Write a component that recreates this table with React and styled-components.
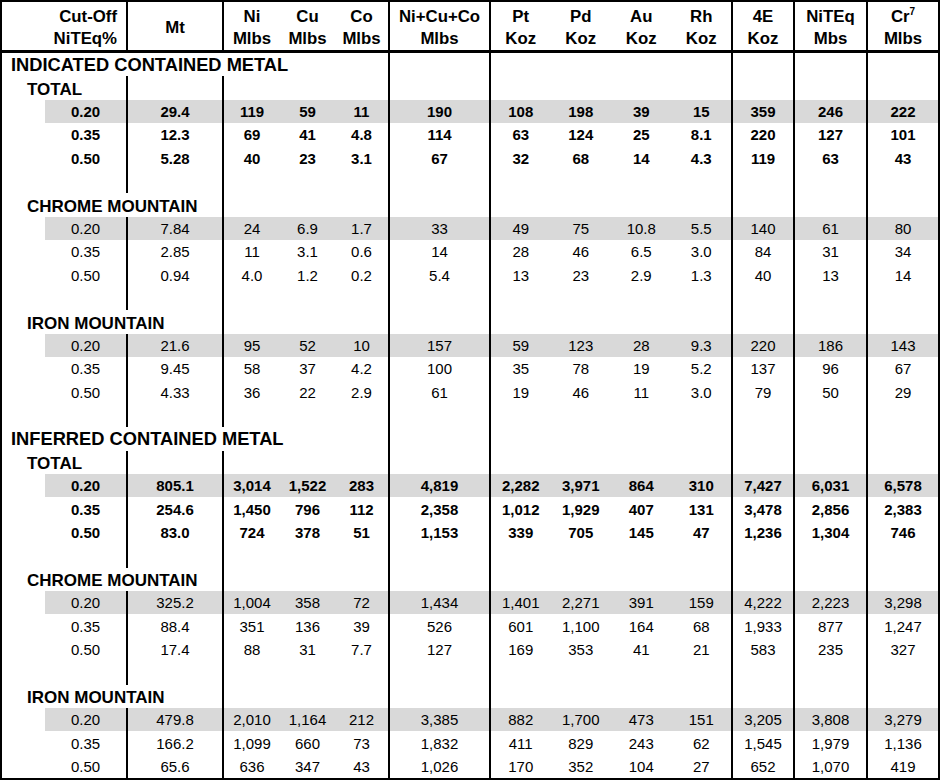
import styled, { createGlobalStyle } from 'styled-components';

const GlobalStyle = createGlobalStyle`
  html, body {
    margin: 0;
    padding: 0;
    background: #ffffff;
  }
  body {
    font-family: "Liberation Sans", Arial, sans-serif;
    color: #000000;
  }
`;

// column widths measured from the grid lines (centre to centre)
const COLS = [44, 82, 96, 57, 55, 54, 101, 60.5, 60.5, 60.5, 60.5, 62, 73, 72];

// columns that carry a vertical rule on their right side
const RULED = new Set([1, 2, 5, 6, 10, 11, 12, 13]);

const HEAD = [
  ['Mt'],
  ['Ni', 'Mlbs'],
  ['Cu', 'Mlbs'],
  ['Co', 'Mlbs'],
  ['Ni+Cu+Co', 'Mlbs'],
  ['Pt', 'Koz'],
  ['Pd', 'Koz'],
  ['Au', 'Koz'],
  ['Rh', 'Koz'],
  ['4E', 'Koz'],
  ['NiTEq', 'Mbs'],
  ['Cr7', 'Mlbs'],
];

const SECTIONS = [
  {
    title: 'INDICATED CONTAINED METAL',
    groups: [
      {
        name: 'TOTAL',
        bold: true,
        rows: [
          ['0.20', '29.4', '119', '59', '11', '190', '108', '198', '39', '15', '359', '246', '222'],
          ['0.35', '12.3', '69', '41', '4.8', '114', '63', '124', '25', '8.1', '220', '127', '101'],
          ['0.50', '5.28', '40', '23', '3.1', '67', '32', '68', '14', '4.3', '119', '63', '43'],
        ],
      },
      {
        name: 'CHROME MOUNTAIN',
        rows: [
          ['0.20', '7.84', '24', '6.9', '1.7', '33', '49', '75', '10.8', '5.5', '140', '61', '80'],
          ['0.35', '2.85', '11', '3.1', '0.6', '14', '28', '46', '6.5', '3.0', '84', '31', '34'],
          ['0.50', '0.94', '4.0', '1.2', '0.2', '5.4', '13', '23', '2.9', '1.3', '40', '13', '14'],
        ],
      },
      {
        name: 'IRON MOUNTAIN',
        rows: [
          ['0.20', '21.6', '95', '52', '10', '157', '59', '123', '28', '9.3', '220', '186', '143'],
          ['0.35', '9.45', '58', '37', '4.2', '100', '35', '78', '19', '5.2', '137', '96', '67'],
          ['0.50', '4.33', '36', '22', '2.9', '61', '19', '46', '11', '3.0', '79', '50', '29'],
        ],
      },
    ],
  },
  {
    title: 'INFERRED CONTAINED METAL',
    groups: [
      {
        name: 'TOTAL',
        bold: true,
        rows: [
          ['0.20', '805.1', '3,014', '1,522', '283', '4,819', '2,282', '3,971', '864', '310', '7,427', '6,031', '6,578'],
          ['0.35', '254.6', '1,450', '796', '112', '2,358', '1,012', '1,929', '407', '131', '3,478', '2,856', '2,383'],
          ['0.50', '83.0', '724', '378', '51', '1,153', '339', '705', '145', '47', '1,236', '1,304', '746'],
        ],
      },
      {
        name: 'CHROME MOUNTAIN',
        rows: [
          ['0.20', '325.2', '1,004', '358', '72', '1,434', '1,401', '2,271', '391', '159', '4,222', '2,223', '3,298'],
          ['0.35', '88.4', '351', '136', '39', '526', '601', '1,100', '164', '68', '1,933', '877', '1,247'],
          ['0.50', '17.4', '88', '31', '7.7', '127', '169', '353', '41', '21', '583', '235', '327'],
        ],
      },
      {
        name: 'IRON MOUNTAIN',
        rows: [
          ['0.20', '479.8', '2,010', '1,164', '212', '3,385', '882', '1,700', '473', '151', '3,205', '3,808', '3,279'],
          ['0.35', '166.2', '1,099', '660', '73', '1,832', '411', '829', '243', '62', '1,545', '1,979', '1,136'],
          ['0.50', '65.6', '636', '347', '43', '1,026', '170', '352', '104', '27', '652', '1,070', '419'],
        ],
      },
    ],
  },
];

const Table = styled.table`
  table-layout: fixed;
  border-collapse: collapse;
  width: 940px;
  border: 2px solid #000;
  font-family: "Liberation Sans", Arial, sans-serif;
  color: #000;
`;

const HeadCell = styled.th`
  height: 43px;
  padding: 4px ${({ $align }) => ($align === 'right' ? '9px' : '0')} 0 0;
  border-bottom: 3px solid #000;
  border-right: ${({ $ruled }) => ($ruled ? '2px solid #000' : 'none')};
  font-size: 16.8px;
  font-weight: 700;
  line-height: 22px;
  text-align: ${({ $align }) => $align || 'center'};
  vertical-align: middle;
  white-space: nowrap;
`;

const Sup = styled.sup`
  font-size: 10px;
  line-height: 0;
  vertical-align: 7px;
`;

const Cell = styled.td`
  height: 23.4px;
  padding: 0;
  border-right: ${({ $ruled }) => ($ruled ? '2px solid #000' : 'none')};
  background: ${({ $shaded }) => ($shaded ? '#d9d9d9' : 'transparent')};
  font-size: 15px;
  font-weight: ${({ $bold }) => ($bold ? 700 : 400)};
  line-height: 21px;
  text-align: center;
  white-space: nowrap;
  overflow: visible;
`;

const SectionCell = styled(Cell)`
  padding-left: 9px;
  font-size: 18.3px;
  font-weight: 700;
  text-align: left;
`;

const GroupCell = styled(Cell)`
  padding-left: 25px;
  font-size: 17px;
  font-weight: 700;
  text-align: left;
  vertical-align: bottom;
`;

const headLabel = (lines) =>
  lines.map((l, i) => (
    <span key={i}>
      {i > 0 && <br />}
      {l === 'Cr7' ? (
        <>
          Cr<Sup>7</Sup>
        </>
      ) : (
        l
      )}
    </span>
  ));

// empty ruled cells from column `from` to the end
const Fill = ({ from }) =>
  COLS.slice(from).map((_, i) => <Cell key={from + i} $ruled={RULED.has(from + i)} />);

const DataRow = ({ values, bold }) => {
  const shaded = values[0] === '0.20';
  return (
    <tr>
      <Cell />
      {values.map((v, i) => (
        <Cell key={i} $bold={bold} $shaded={shaded} $ruled={RULED.has(i + 1)}>
          {v}
        </Cell>
      ))}
    </tr>
  );
};

const App = () => {
  const body = [];
  SECTIONS.forEach((sec, si) => {
    body.push(
      <tr key={`s${si}`}>
        <SectionCell colSpan={6} $ruled>
          {sec.title}
        </SectionCell>
        <Fill from={6} />
      </tr>
    );
    sec.groups.forEach((g, gi) => {
      const span = g.bold ? 2 : 3;
      body.push(
        <tr key={`g${si}-${gi}`}>
          <GroupCell colSpan={span} $ruled>
            {g.name}
          </GroupCell>
          <Fill from={span} />
        </tr>
      );
      g.rows.forEach((r, ri) => {
        body.push(<DataRow key={`r${si}-${gi}-${ri}`} values={r} bold={g.bold} />);
      });
      const last = si === SECTIONS.length - 1 && gi === sec.groups.length - 1;
      if (!last) {
        body.push(
          <tr key={`b${si}-${gi}`}>
            <Fill from={0} />
          </tr>
        );
      }
    });
  });

  return (
    <>
      <GlobalStyle />
      <Table>
        <colgroup>
          {COLS.map((w, i) => (
            <col key={i} style={{ width: `${w}px` }} />
          ))}
        </colgroup>
        <thead>
          <tr>
            <HeadCell colSpan={2} $align="right" $ruled>
              Cut-Off
              <br />
              NiTEq%
            </HeadCell>
            {HEAD.map((h, i) => (
              <HeadCell key={i} $ruled={RULED.has(i + 2)}>
                {headLabel(h)}
              </HeadCell>
            ))}
          </tr>
        </thead>
        <tbody>{body}</tbody>
      </Table>
    </>
  );
};

export default App;
